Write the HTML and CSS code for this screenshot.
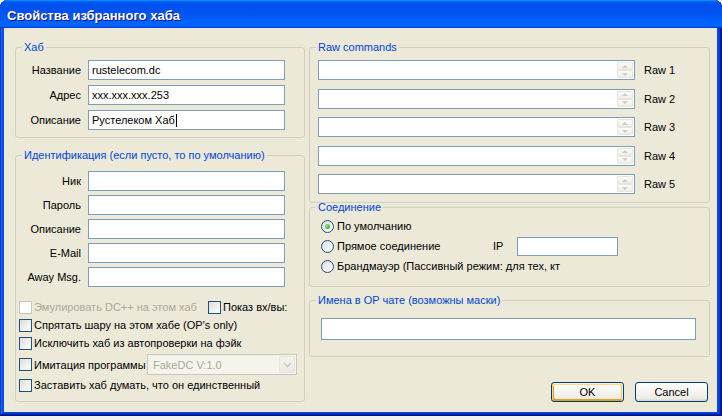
FILE: index.html
```html
<!DOCTYPE html>
<html lang="ru">
<head>
<meta charset="utf-8">
<title>Свойства избранного хаба</title>
<link rel="stylesheet" href="styles.css">
</head>
<body>
<div class="window">
  <div class="titlebar"><span class="title">Свойства избранного хаба</span></div>
  <div class="body">
    <div class="col col-left">
      <fieldset class="group g-hub">
        <legend>Хаб</legend>
        <div class="form">
          <span class="lbl">Название</span><div class="field">rustelecom.dc</div>
          <span class="lbl">Адрес</span><div class="field">xxx.xxx.xxx.253</div>
          <span class="lbl">Описание</span><div class="field">Рустелеком Хаб<span class="caret"></span></div>
        </div>
      </fieldset>
      <fieldset class="group g-ident">
        <legend>Идентификация (если пусто, то по умолчанию)</legend>
        <div class="form form-ident">
          <span class="lbl">Ник</span><div class="field"></div>
          <span class="lbl">Пароль</span><div class="field"></div>
          <span class="lbl">Описание</span><div class="field"></div>
          <span class="lbl">E-Mail</span><div class="field"></div>
          <span class="lbl">Away Msg.</span><div class="field"></div>
        </div>
        <div class="checks">
          <div class="chk-row">
            <span class="chk-item emu disabled"><span class="cb"></span><span class="cb-text">Эмулировать DC++ на этом хаб</span></span>
            <span class="chk-item show-join"><span class="cb"></span><span class="cb-text">Показ вх/вы:</span></span>
          </div>
          <div class="chk-row"><span class="chk-item"><span class="cb"></span><span class="cb-text">Спрятать шару на этом хабе (OP's only)</span></span></div>
          <div class="chk-row"><span class="chk-item"><span class="cb"></span><span class="cb-text">Исключить хаб из автопроверки на фэйк</span></span></div>
          <div class="chk-row row-imit">
            <span class="chk-item"><span class="cb"></span><span class="cb-text imit-text">Имитация программы</span></span>
            <div class="combo disabled">
              <span class="combo-text">FakeDC V:1.0</span>
              <span class="combo-btn"><svg width="9" height="6" viewBox="0 0 9 6"><polyline points="1,1 4.5,4.5 8,1" fill="none" stroke="#cdcbc0" stroke-width="1.6"/></svg></span>
            </div>
          </div>
          <div class="chk-row row-last"><span class="chk-item"><span class="cb"></span><span class="cb-text">Заставить хаб думать, что он единственный</span></span></div>
        </div>
      </fieldset>
    </div>
    <div class="col col-right">
      <fieldset class="group g-raw">
        <legend>Raw commands</legend>
        <div class="raw-grid">
          <div class="field raw"><span class="spin"><span class="spin-up"><i class="arr up"></i></span><span class="spin-down"><i class="arr down"></i></span></span></div><span class="raw-lbl">Raw 1</span>
          <div class="field raw"><span class="spin"><span class="spin-up"><i class="arr up"></i></span><span class="spin-down"><i class="arr down"></i></span></span></div><span class="raw-lbl">Raw 2</span>
          <div class="field raw"><span class="spin"><span class="spin-up"><i class="arr up"></i></span><span class="spin-down"><i class="arr down"></i></span></span></div><span class="raw-lbl">Raw 3</span>
          <div class="field raw"><span class="spin"><span class="spin-up"><i class="arr up"></i></span><span class="spin-down"><i class="arr down"></i></span></span></div><span class="raw-lbl">Raw 4</span>
          <div class="field raw"><span class="spin"><span class="spin-up"><i class="arr up"></i></span><span class="spin-down"><i class="arr down"></i></span></span></div><span class="raw-lbl">Raw 5</span>
        </div>
      </fieldset>
      <fieldset class="group g-conn">
        <legend>Соединение</legend>
        <div class="radios">
          <div class="radio-row"><span class="radio checked"></span><span class="rtext">По умолчанию</span></div>
          <div class="radio-row"><span class="radio"></span><span class="rtext direct">Прямое соединение</span><span class="ip-lbl">IP</span><div class="field ip"></div></div>
          <div class="radio-row"><span class="radio"></span><span class="rtext">Брандмауэр (Пассивный режим: для тех, кт</span></div>
        </div>
      </fieldset>
      <fieldset class="group g-op">
        <legend>Имена в OP чате (возможны маски)</legend>
        <div class="op-inner"><div class="field op"></div></div>
      </fieldset>
      <div class="buttons">
        <button class="btn default">OK</button>
        <button class="btn">Cancel</button>
      </div>
    </div>
  </div>
</div>
</body>
</html>
```

FILE: styles.css
```css
* { box-sizing: border-box; }
html, body { margin: 0; padding: 0; }
body {
  width: 722px;
  height: 420px;
  overflow: hidden;
  background: #f2f2f2;
  font-family: "Liberation Sans", Arial, sans-serif;
  font-size: 11px;
  color: #000;
}

/* window frame */
.window {
  width: 722px;
  height: 416px;
  display: flex;
  flex-direction: column;
  background: #0a48dc;
  border-radius: 8px 8px 0 0;
  box-shadow: inset -1px -1px #00138c, inset 1px 1px #0831d9, inset -2px -2px #001ea0, inset 2px 2px #166aee, inset -3px -3px #003bda, inset 3px 3px #0855dd;
}
.titlebar {
  height: 28px;
  flex: none;
  display: flex;
  align-items: center;
  padding: 2px 0 0 7px;
  border-radius: 8px 8px 0 0;
  background: linear-gradient(180deg, #0997ff, #0053ee 8%, #0050ee 40%, #06f 88%, #06f 93%, #005bff 95%, #003dd7 96%, #003dd7);
}
.title {
  color: #fff;
  font-weight: bold;
  font-size: 13px;
  text-shadow: 1px 1px #0f1089;
}
.body {
  flex: 1;
  margin: 0 5px 4px 4px;
  background: #ece9d8;
  display: flex;
  gap: 4px;
  padding: 14px 7px 0 11px;
}
.col { display: flex; flex-direction: column; }
.col-left { width: 290px; }
.col-right { width: 401px; }

/* group boxes */
fieldset.group {
  margin: 0;
  padding: 0;
  min-width: 0;
  border: 1px solid #d0d0bf;
  border-radius: 3px;
}
fieldset.group legend {
  margin-left: 6px;
  padding: 0 2px;
  line-height: 11px;
  height: 11px;
  color: #0046d5;
}

/* text fields */
.field {
  height: 20px;
  border: 1px solid #7f9db9;
  background: #fff;
  padding: 0 3px;
  line-height: 18px;
  white-space: nowrap;
  overflow: hidden;
}
.caret {
  display: inline-block;
  width: 1px;
  height: 13px;
  background: #000;
  vertical-align: -3px;
  margin-left: 1px;
}

/* left forms */
.form {
  display: grid;
  grid-template-columns: 65px 197px;
  grid-auto-rows: 20px;
  column-gap: 7px;
  row-gap: 5px;
  padding: 7px 0 7px 0;
}
.form-ident { row-gap: 4px; padding: 10px 0 0 0; }
.lbl { text-align: right; line-height: 20px; white-space: nowrap; }

fieldset.g-ident { margin-top: 12px; }
.checks { display: flex; flex-direction: column; padding: 11px 0 7px 3px; }
.chk-row { display: flex; align-items: center; height: 18px; }
.row-imit { height: 21px; margin-top: 2px; }
.row-last { margin-top: 1px; }
.chk-item { display: flex; align-items: center; white-space: nowrap; }
.cb {
  flex: none;
  width: 13px;
  height: 13px;
  border: 1px solid #1c5180;
  background: linear-gradient(135deg, #dcdcd7, #fff);
  margin-right: 2px;
}
.emu { width: 181px; }
.disabled .cb { border-color: #cac8bb; background: #fff; }
.disabled .cb-text { color: #aca899; }
.show-join { margin-left: 8px; }
.imit-text { width: 113px; }

.combo {
  width: 150px;
  height: 21px;
  border: 1px solid #c9c7ba;
  background: #f5f4ea;
  display: flex;
  align-items: center;
  padding: 1px;
}
.combo-text { flex: 1; padding-left: 4px; color: #aca899; }
.combo-btn {
  width: 16px;
  height: 17px;
  background: linear-gradient(180deg, #f4f3ee, #ebeae3);
  border: 1px solid #e6e4db;
  border-radius: 2px;
  display: flex;
  align-items: center;
  justify-content: center;
}

/* raw commands */
.raw-grid {
  display: grid;
  grid-template-columns: 317px auto;
  grid-auto-rows: 20px;
  column-gap: 9px;
  row-gap: 8.5px;
  padding: 7px 0 8px 8px;
}
.field.raw { display: flex; justify-content: flex-end; padding: 1px; }
.raw-lbl { line-height: 20px; }
.spin { width: 16px; display: flex; flex-direction: column; }
.spin-up, .spin-down {
  flex: 1;
  background: linear-gradient(180deg, #fbfbf8, #eeede6);
  border: 1px solid #e6e5de;
  border-radius: 1px;
  display: flex;
  align-items: center;
  justify-content: center;
}
.arr { width: 0; height: 0; border-left: 3px solid transparent; border-right: 3px solid transparent; }
.arr.up { border-bottom: 3px solid #cfcec6; }
.arr.down { border-top: 3px solid #cfcec6; }

/* connection */
fieldset.g-conn { margin-top: -1px; }
.radios { padding: 3px 0 10px 11px; display: flex; flex-direction: column; }
.radio-row { height: 20px; display: flex; align-items: center; white-space: nowrap; }
.radio {
  flex: none;
  width: 13px;
  height: 13px;
  border-radius: 50%;
  border: 1px solid #1c5180;
  background: linear-gradient(135deg, #dcdcd7, #fff);
  margin-right: 3px;
  display: flex;
  align-items: center;
  justify-content: center;
}
.radio.checked::after {
  content: "";
  width: 5px;
  height: 5px;
  border-radius: 50%;
  background: radial-gradient(circle at 35% 35%, #8fe07c, #21a121);
}
.direct { width: 156px; }
.ip-lbl { width: 24px; }
.field.ip { width: 101px; height: 19px; }

/* op chat */
fieldset.g-op { margin-top: 8px; }
.op-inner { padding: 12px 0 16px 11px; }
.field.op { width: 375px; height: 22px; }

/* buttons */
.buttons {
  margin-top: 25px;
  display: flex;
  justify-content: flex-end;
  gap: 11px;
  padding-right: 2px;
}
.btn {
  width: 73px;
  height: 20px;
  padding: 0;
  font-family: inherit;
  font-size: 11px;
  color: #000;
  border: 1px solid #003c74;
  border-radius: 3px;
  background: linear-gradient(180deg, #fff, #ecebe6 86%, #d6d0c5);
}
.btn.default {
  box-shadow: inset -1px 1px #fff0cf, inset 1px 2px #fdd889, inset -2px 2px #fbc761, inset 2px -2px #e5a01a;
}
```
